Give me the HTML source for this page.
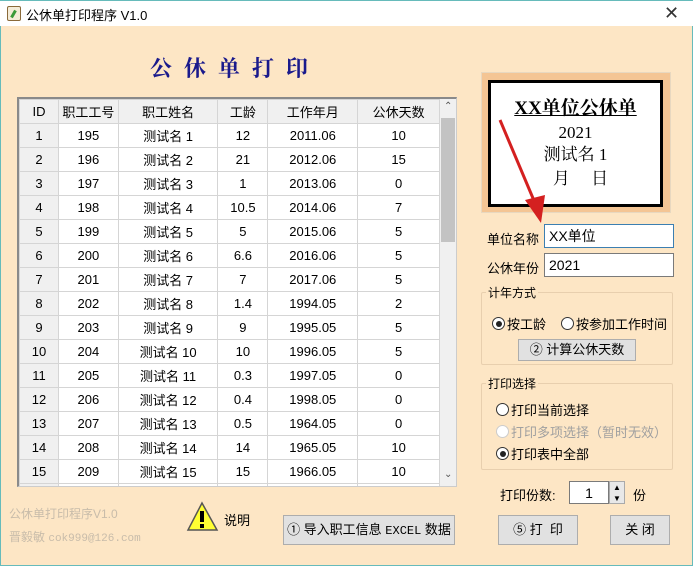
<!DOCTYPE html>
<html><head><meta charset="utf-8"><style>
*{margin:0;padding:0;box-sizing:border-box}
body{width:693px;height:566px;overflow:hidden;background:#fde6c5;font-family:"Liberation Sans","Noto Sans CJK SC",sans-serif;font-size:13px;color:#000;position:relative}
.a{position:absolute}
#tb{left:0;top:0;width:693px;height:26px;background:#fff;border-top:1px solid #6bb;}
#tb .t{left:26px;top:4px;font-size:13px}
table{border-collapse:collapse;font-size:13px}
td{border:1px solid #d5d5d5;height:24px;text-align:center;background:#fff;padding:0}
tr.h td{background:#f0f0f0;height:24px}
td.id{background:#f0f0f0}
.btn{position:absolute;background:#e1e1e1;border:1px solid #adadad;text-align:center;font-size:13px}
.inp{position:absolute;background:#fff;border:1px solid #7a7a7a;font-size:14px;padding-left:4px;line-height:22px}
.grp{position:absolute;border:1px solid #e8cfae;border-radius:2px}
.lg{position:absolute;background:#fde6c5;padding:0 2px;font-size:12px}
.rd{position:absolute;font-size:13px;display:flex;align-items:center}
.rd i{display:inline-block;width:13px;height:13px;border:1px solid #333;border-radius:50%;background:#fff;margin-right:2px;position:relative}
.rd i.on:after{content:"";position:absolute;left:2.5px;top:2.5px;width:6px;height:6px;border-radius:50%;background:#222}
</style></head><body>
<div id="tb" class="a">
<div class="a" style="left:7px;top:5px;width:14px;height:15px;border:1px solid #8a6a3a;background:#f4ecd8;border-radius:2px"><div class="a" style="left:4px;top:3px;width:3px;height:8px;background:#3a9a3a;transform:rotate(30deg)"></div></div>
<div class="a t">公休单打印程序 V1.0</div>
<div class="a" style="left:664px;top:2px;font-size:18px;color:#333">✕</div>
</div>
<div class="a" style="left:0;top:26px;width:1px;height:540px;background:#6bb"></div>
<div class="a" style="left:692px;top:26px;width:1px;height:540px;background:#6bb"></div>
<div class="a" style="left:0;top:565px;width:693px;height:1px;background:#6bb"></div>
<div class="a" style="left:150px;top:52px;font-size:22px;font-weight:bold;color:#1a1a8c;letter-spacing:12px;font-family:'Liberation Serif','Noto Serif CJK SC',serif">公休单打印</div>

<div class="a" style="left:17px;top:97px;width:440px;height:390px;border:2px solid #8a8a8a;border-right:1px solid #ccc;border-bottom:1px solid #ccc;background:#fff;overflow:hidden">
<table class="a" style="left:0;top:0;width:421px">
<colgroup><col style="width:39px"><col style="width:60px"><col style="width:100px"><col style="width:50px"><col style="width:90px"><col style="width:82px"></colgroup>
<tr class="h"><td>ID</td><td>职工工号</td><td>职工姓名</td><td>工龄</td><td>工作年月</td><td>公休天数</td></tr>
<tr><td class="id">1</td><td>195</td><td>测试名 1</td><td>12</td><td>2011.06</td><td>10</td></tr>
<tr><td class="id">2</td><td>196</td><td>测试名 2</td><td>21</td><td>2012.06</td><td>15</td></tr>
<tr><td class="id">3</td><td>197</td><td>测试名 3</td><td>1</td><td>2013.06</td><td>0</td></tr>
<tr><td class="id">4</td><td>198</td><td>测试名 4</td><td>10.5</td><td>2014.06</td><td>7</td></tr>
<tr><td class="id">5</td><td>199</td><td>测试名 5</td><td>5</td><td>2015.06</td><td>5</td></tr>
<tr><td class="id">6</td><td>200</td><td>测试名 6</td><td>6.6</td><td>2016.06</td><td>5</td></tr>
<tr><td class="id">7</td><td>201</td><td>测试名 7</td><td>7</td><td>2017.06</td><td>5</td></tr>
<tr><td class="id">8</td><td>202</td><td>测试名 8</td><td>1.4</td><td>1994.05</td><td>2</td></tr>
<tr><td class="id">9</td><td>203</td><td>测试名 9</td><td>9</td><td>1995.05</td><td>5</td></tr>
<tr><td class="id">10</td><td>204</td><td>测试名 10</td><td>10</td><td>1996.05</td><td>5</td></tr>
<tr><td class="id">11</td><td>205</td><td>测试名 11</td><td>0.3</td><td>1997.05</td><td>0</td></tr>
<tr><td class="id">12</td><td>206</td><td>测试名 12</td><td>0.4</td><td>1998.05</td><td>0</td></tr>
<tr><td class="id">13</td><td>207</td><td>测试名 13</td><td>0.5</td><td>1964.05</td><td>0</td></tr>
<tr><td class="id">14</td><td>208</td><td>测试名 14</td><td>14</td><td>1965.05</td><td>10</td></tr>
<tr><td class="id">15</td><td>209</td><td>测试名 15</td><td>15</td><td>1966.05</td><td>10</td></tr>
<tr><td class="id"></td><td></td><td></td><td></td><td></td><td></td></tr>
</table>
<div class="a" style="left:421px;top:0;width:17px;height:388px;background:#f0f0f0">
<div class="a" style="left:4px;top:2px;font-size:10px;color:#555">⌃</div>
<div class="a" style="left:1px;top:19px;width:14px;height:124px;background:#c3c3c3"></div>
<div class="a" style="left:4px;top:370px;font-size:10px;color:#555">⌄</div>
</div>
</div>

<div class="a" style="left:481px;top:72px;width:190px;height:141px;background:#f4c594;border:1px solid #e8d8c0"></div>
<div class="a" style="left:488px;top:80px;width:175px;height:127px;background:#fff;border:3px solid #000;font-family:'Liberation Serif','Noto Serif CJK SC',serif;text-align:center">
<div style="margin-top:10px;font-size:19px;font-weight:bold;text-decoration:underline">XX单位公休单</div>
<div style="font-size:17px;line-height:22px;margin-top:2px">2021</div>
<div style="font-size:17px;line-height:22px">测试名 1</div>
<div style="font-size:17px;line-height:26px;padding-left:10px">月&nbsp;&nbsp;&nbsp;&nbsp;&nbsp;日</div>
</div>
<svg class="a" style="left:495px;top:115px" width="60" height="115"><line x1="5" y1="5" x2="40" y2="88" stroke="#d42020" stroke-width="3"/><polygon points="30,85 50,80 46,108" fill="#d42020"/></svg>

<div class="a" style="left:487px;top:229px">单位名称</div>
<div class="inp" style="left:544px;top:224px;width:130px;height:24px;border-color:#3c7fb1">XX单位</div>
<div class="a" style="left:487px;top:258px">公休年份</div>
<div class="inp" style="left:544px;top:253px;width:130px;height:24px">2021</div>

<div class="grp" style="left:481px;top:292px;width:192px;height:73px"></div>
<div class="lg" style="left:486px;top:284px">计年方式</div>
<div class="rd" style="left:492px;top:314px"><i class="on"></i>按工龄</div>
<div class="rd" style="left:561px;top:314px"><i></i>按参加工作时间</div>
<div class="btn" style="left:518px;top:339px;width:118px;height:22px;line-height:20px">② 计算公休天数</div>

<div class="grp" style="left:481px;top:383px;width:192px;height:87px"></div>
<div class="lg" style="left:486px;top:375px">打印选择</div>
<div class="rd" style="left:496px;top:400px"><i></i>打印当前选择</div>
<div class="rd" style="left:496px;top:422px;color:#a0a0a0"><i style="border-color:#ccc"></i>打印多项选择（暂时无效）</div>
<div class="rd" style="left:496px;top:444px"><i class="on"></i>打印表中全部</div>

<div class="a" style="left:500px;top:485px">打印份数:</div>
<div class="inp" style="left:569px;top:481px;width:40px;height:23px;text-align:center;padding:0">1</div>
<div class="a" style="left:609px;top:481px;width:16px;height:23px;background:#e8e8e8;border:1px solid #aaa;font-size:8px;text-align:center;line-height:11px">▲<br>▼</div>
<div class="a" style="left:633px;top:485px">份</div>

<div class="btn" style="left:498px;top:515px;width:80px;height:30px;line-height:28px">⑤ 打&nbsp;&nbsp;印</div>
<div class="btn" style="left:610px;top:515px;width:60px;height:30px;line-height:28px">关 闭</div>

<div class="a" style="left:9px;top:505px;color:#c8bcaa;font-size:12px">公休单打印程序V1.0</div>
<div class="a" style="left:9px;top:528px;color:#c8bcaa;font-size:12px">晋毅敏 <span style="font-family:'Liberation Mono',monospace;font-size:11px">cok999@126.com</span></div>
<svg class="a" style="left:186px;top:501px" width="34" height="32"><polygon points="16,2 31,29 2,29" fill="#ffff33" stroke="#555" stroke-width="1.5"/><rect x="14" y="10" width="4" height="11" fill="#000"/><rect x="14" y="23" width="4" height="4" fill="#000"/></svg>
<div class="a" style="left:224px;top:510px">说明</div>
<div class="btn" style="left:283px;top:515px;width:172px;height:30px;line-height:28px">① 导入职工信息 <span style="font-family:'Liberation Mono',monospace;font-size:12px">EXCEL</span> 数据</div>
</body></html>
